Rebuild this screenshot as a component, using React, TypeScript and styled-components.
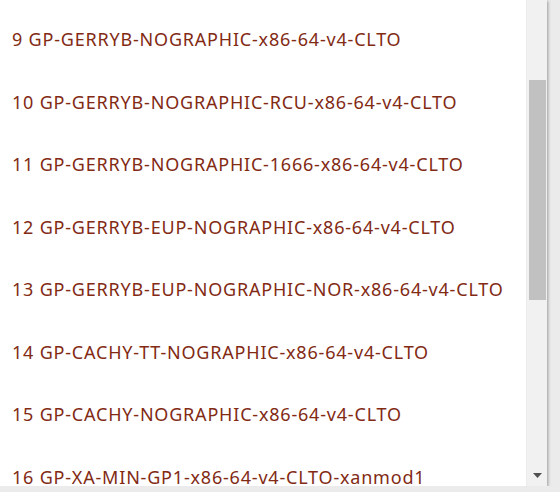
import React from "react";
import styled, { createGlobalStyle } from "styled-components";

const GlobalStyle = createGlobalStyle`
  html, body {
    margin: 0;
    padding: 0;
    background: #ebebeb;
    overflow: hidden;
  }
`;

const Panel = styled.div`
  display: flex;
  width: 547px;
  height: 486px;
  background: #ffffff;
  box-shadow: 1px 1px 3px rgba(0, 0, 0, 0.35);
  overflow: hidden;
`;

const List = styled.ul`
  flex: 1;
  min-width: 0;
  margin: 0;
  padding: 8px 0 0 12px;
  list-style: none;
  display: flex;
  flex-direction: column;
`;

const Item = styled.li`
  flex: none;
  height: 62.5px;
  display: flex;
  align-items: center;
  font-family: "Noto Sans", "Open Sans", sans-serif;
  font-size: 18px;
  letter-spacing: 0.8px;
  color: #822a14;
  white-space: nowrap;
`;

const Track = styled.div`
  flex: none;
  width: 21px;
  display: flex;
  flex-direction: column;
  align-items: center;
  background: #f1f1f1;
  border-left: 1px solid #ececec;
  box-sizing: border-box;
`;

const Gap = styled.div<{ $h: number }>`
  flex: none;
  height: ${(p) => p.$h}px;
`;

const Thumb = styled.div`
  flex: none;
  width: 17px;
  height: 220px;
  background: #c1c1c1;
`;

const ArrowBox = styled.div`
  margin-top: auto;
  height: 21px;
  display: flex;
  align-items: center;
  justify-content: center;
`;

const entries = [
  "9 GP-GERRYB-NOGRAPHIC-x86-64-v4-CLTO",
  "10 GP-GERRYB-NOGRAPHIC-RCU-x86-64-v4-CLTO",
  "11 GP-GERRYB-NOGRAPHIC-1666-x86-64-v4-CLTO",
  "12 GP-GERRYB-EUP-NOGRAPHIC-x86-64-v4-CLTO",
  "13 GP-GERRYB-EUP-NOGRAPHIC-NOR-x86-64-v4-CLTO",
  "14 GP-CACHY-TT-NOGRAPHIC-x86-64-v4-CLTO",
  "15 GP-CACHY-NOGRAPHIC-x86-64-v4-CLTO",
  "16 GP-XA-MIN-GP1-x86-64-v4-CLTO-xanmod1",
];

export default function App() {
  return (
    <>
      <GlobalStyle />
      <Panel>
        <List>
          {entries.map((e) => (
            <Item key={e}>{e}</Item>
          ))}
        </List>
        <Track>
          <Gap $h={80} />
          <Thumb />
          <ArrowBox>
            <svg width="9" height="5" viewBox="0 0 9 5">
              <path d="M0 0h9L4.5 5z" fill="#505050" />
            </svg>
          </ArrowBox>
        </Track>
      </Panel>
    </>
  );
}
